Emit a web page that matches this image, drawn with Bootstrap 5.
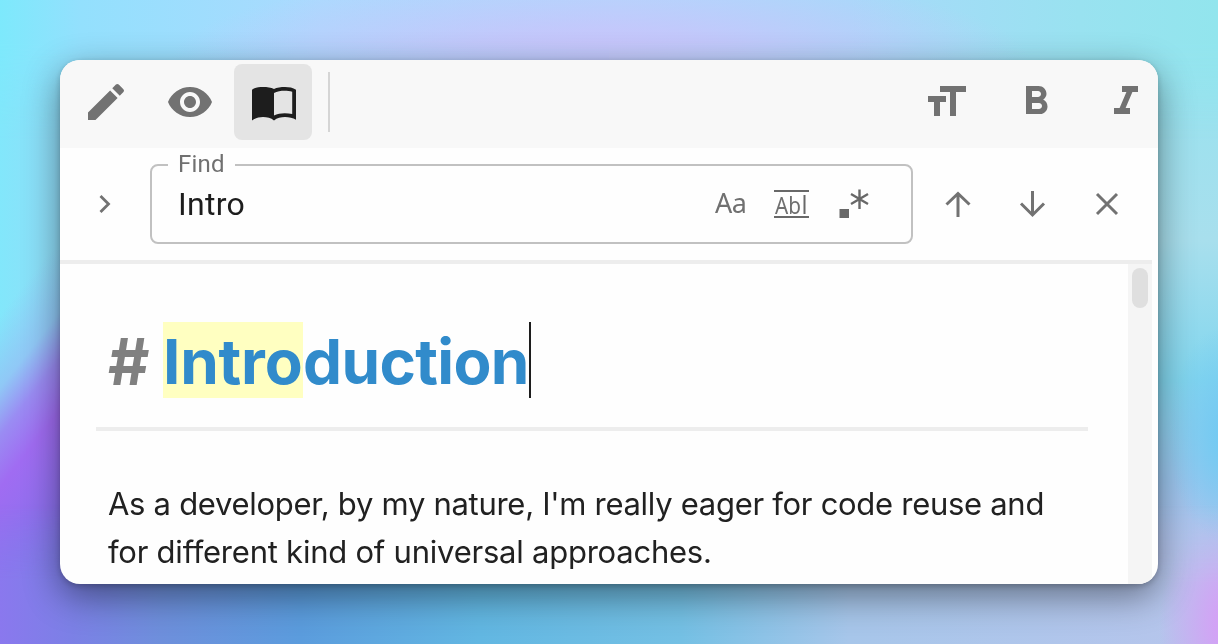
<!DOCTYPE html>
<html lang="en">
<head>
<meta charset="utf-8">
<meta name="viewport" content="width=device-width, initial-scale=1">
<title>Markdown editor</title>
<link href="https://cdn.jsdelivr.net/npm/bootstrap@5.3.0/dist/css/bootstrap.min.css" rel="stylesheet">
<style>
body{height:644px;padding:60px;overflow:hidden;font-family:Inter,"Liberation Sans",sans-serif;color:#212121;
background:
linear-gradient(128deg,#90c8f600 40px,#90c8f6 85px,#9a8cf3 114px,#a06cf2 146px,#8d70ee 200px,#7c7ae8 250px) 0 250px/120px 394px no-repeat,
radial-gradient(ellipse 60px 110px at 1228px 435px,#74caf2 15%,#74caf200 100%),
linear-gradient(180deg,#97e2ef 60px,#a8dfed 240px,#82d6ee 380px,#9cc6ee 480px,#b4c2ed 560px,#b9c4ed 644px) 609px 0/609px 100% no-repeat,
linear-gradient(90deg,#82e7fb 0,#90dcf8 60px,#90dcf8 100%)}
/* soft colour bands along the top and bottom of the backdrop */
body::before,body::after{content:"";position:fixed;z-index:-1;left:0;right:0;height:140px}
body::before{top:0;background:radial-gradient(ellipse 430px 90px at 600px 60px,#c9c3fb 0,#c9c3fbc0 35%,#c9c3fb00 100%),linear-gradient(90deg,#7de9fc 0,#93e0fd 80px,#abdafe 320px,#b0d9fd 620px,#a8d9fa 850px,#99e2f0 1080px,#92e5ed 1218px);-webkit-mask-image:linear-gradient(#000 30%,transparent)}
body::after{bottom:0;background:radial-gradient(ellipse 75px 120px at 1234px 122px,#d2a3f5 25%,#d2a3f500 100%),linear-gradient(90deg,#8a78ee 0,#7c80e6 70px,#6e8fdc 160px,#5b9cdd 300px,#62b7e2 480px,#74c0e4 680px,#a7c6ea 850px,#b7c5ec 1218px);-webkit-mask-image:linear-gradient(transparent,#000 56%)}
.editor{width:1098px;height:524px;border-radius:20px;background:#fefefe;box-shadow:0 12px 36px rgba(0,0,0,.44),0 2px 6px rgba(0,0,0,.2)}
.editor-tools{height:88px;background:#f8f8f8;color:#727272;padding:4px 0 0 6px}
.editor-tools .btn{width:78px;height:76px;padding:0 0 0 2px;margin-right:6px;border:0;border-radius:8px;color:inherit;line-height:0}
.editor-tools .btn.active{background:#e4e4e4;color:#1d1d1d}
.editor-tools .format-tool{width:90px;margin:0;padding:0}
.tool-rule{width:2px;height:60px;margin:8px 0 0 10px;background:#d5d5d5}
.tools-end{margin-right:-13px}
.find-row{width:1092px;height:116px;border-bottom:4px solid #ededed;color:#727272;font-family:Roboto,"Liberation Sans",sans-serif}
.find-toggle{width:90px;height:112px}
.find-field{width:763px;height:91px;margin-top:5px;border:2px solid #c1c1c1;border-radius:8px;padding:0 40px 0 26px}
.find-field legend{float:none;width:67px;height:24px;margin:0 0 0 -10px;padding-left:10px;font-size:24px;line-height:22px;letter-spacing:.2px;color:#707070}
.find-field .form-control{border:0;padding:0;font-size:32px;line-height:40px;letter-spacing:.3px;color:#1d1d1d;background:none;box-shadow:none}
.find-text{height:54px}
.find-steps{height:112px}
.page-body{height:320px}
.page-text{width:1068px;padding:58px 40px 0 36px}
.page-text h1{height:109px;margin:0;padding-left:12px;border-bottom:4px solid #ededed;font-size:62px;font-weight:700;line-height:79px;letter-spacing:-.65px;white-space:pre;color:#318bcb}
.hash-sign{color:#808080;width:55px;font-size:64px}
.found{background:#ffffc1;width:140px;height:76px;letter-spacing:-.2px}
.caret{width:2px;height:76px;background:#1d1d1d}
.page-text p{margin:49px 0 0 12px;font-size:31px;line-height:48px;letter-spacing:-.29px;white-space:nowrap}
.last-line{letter-spacing:-.23px}
.scroll-track{width:24px;background:#f5f5f5;padding:4px}
.scroll-thumb{height:40px;border-radius:8px;background:#dfdfdf}
</style>
</head>
<body>
<main class="editor overflow-hidden">
 <div class="editor-tools d-flex align-items-start">
  <button class="btn" aria-label="Edit"><svg width="48" height="48" viewBox="0 0 24 24" fill="currentColor"><path d="M3 17.25V21h3.75L17.81 9.94l-3.75-3.75L3 17.25zM20.71 7.04a1 1 0 0 0 0-1.41l-2.34-2.34a1 1 0 0 0-1.41 0l-1.83 1.83 3.75 3.75 1.83-1.83z"/></svg></button>
  <button class="btn" aria-label="Preview"><svg width="48" height="48" viewBox="0 0 24 24" fill="currentColor"><path d="M12 4.5C7 4.5 2.73 7.61 1 12c1.73 4.39 6 7.5 11 7.5s9.27-3.11 11-7.5c-1.73-4.39-6-7.5-11-7.5zM12 17c-2.76 0-5-2.24-5-5s2.24-5 5-5 5 2.24 5 5-2.24 5-5 5zm0-8c-1.66 0-3 1.34-3 3s1.34 3 3 3 3-1.34 3-3-1.34-3-3-3z"/></svg></button>
  <button class="btn active" aria-label="Split view"><svg width="48" height="48" viewBox="0 0 24 24" fill="currentColor"><path fill-rule="evenodd" d="M12 5.5C10.6 4.7 8.5 4.5 6.5 4.5S2.4 4.8 1 5.9v15.4C2.4 20.1 4.5 19.5 6.500 19.5s4 .5 5.500 1.700c1.500-1.200 3.500-1.700 5.500-1.700s4 .5 5.500 1.400V5.900C21.500 4.800 19.500 4.500 17.500 4.500s-4.100.2-5.500 1zm0 13.300V7.500c1.500-.8 3.500-1.100 5.300-1.100 1.300 0 2.700.1 3.800.5V18c-1.200-.3-2.500-.4-3.800-.4-1.800 0-3.800.4-5.300 1.200z"/></svg></button>
  <div class="tool-rule"></div>
  <div class="tools-end d-flex ms-auto">
   <button class="btn format-tool" aria-label="Text size"><svg width="48" height="48" viewBox="0 0 24 24" fill="currentColor"><path d="M9 4h13v3h-5v12h-3V7H9zM3 9h9v3H9v7H6v-7H3z"/></svg></button>
   <button class="btn format-tool" aria-label="Bold"><svg width="48" height="48" viewBox="0 0 24 24" fill="currentColor"><path d="M15.6 10.79c.97-.67 1.65-1.77 1.65-2.79 0-2.26-1.75-4-4-4H7v14h7.04c2.09 0 3.71-1.7 3.71-3.79 0-1.52-.86-2.82-2.15-3.42zM10 6.5h3c.83 0 1.5.67 1.5 1.5s-.67 1.5-1.5 1.5h-3zm3.500 9H10v-3h3.500c.83 0 1.500.67 1.500 1.500s-.67 1.500-1.500 1.500z"/></svg></button>
   <button class="btn format-tool" aria-label="Italic"><svg width="48" height="48" viewBox="0 0 24 24" fill="currentColor"><path d="M10 4v3h2.210l-3.420 8H6v3h8v-3h-2.210l3.420-8H18V4z"/></svg></button>
  </div>
 </div>
 <div class="find-row d-flex align-items-start">
  <div class="find-toggle d-flex align-items-center justify-content-center flex-shrink-0"><svg width="16" height="22" viewBox="0 0 16 22"><path d="M3.500 3l8 8-8 8" fill="none" stroke="currentColor" stroke-width="2.800"/></svg></div>
  <fieldset class="find-field flex-shrink-0">
   <legend>Find</legend>
   <div class="find-text d-flex align-items-center">
    <input class="form-control flex-fill" value="Intro" aria-label="Find">
    <svg class="flex-shrink-0" width="156" height="48" viewBox="0 0 156 48">
     <g font-family="Noto Sans,sans-serif" fill="#707070"><text x="0" y="32.500" font-size="27" textLength="32">Aa</text><text x="60" y="33.500" font-size="23" textLength="26" lengthAdjust="spacingAndGlyphs">Ab</text></g>
     <path d="M59 11h35M59 37h35M89.500 15v19" stroke="#686868" stroke-width="2"/><path d="M124.500 29h9.500v9h-9.500z" fill="#686868"/><path d="M144.500 9.500V29M136 14l17 10M136 24l17-10" stroke="#686868" stroke-width="2.400"/>
    </svg>
   </div>
  </fieldset>
  <div class="find-steps d-flex align-items-center">
   <svg class="flex-shrink-0" width="230" height="48" viewBox="0 0 230 48"><path d="M45 37V13.500M33.500 24.500L45 13.500l11.500 11M119.500 11v23.500M108 23.500l11.500 11.500L131 23.500M184 14l20 20M184 34l20-20" fill="none" stroke="currentColor" stroke-width="3"/></svg>
  </div>
 </div>
 <div class="page-body d-flex">
  <article class="page-text">
   <h1 class="d-flex"><span class="hash-sign">#</span><span class="found">Intro</span><span>duction</span><span class="caret"></span></h1>
   <p>As a developer, by my nature, I'm really eager for code reuse and<br><span class="last-line">for different kind of universal approaches.</span></p>
  </article>
  <div class="scroll-track"><div class="scroll-thumb"></div></div>
 </div>
</main>
<script src="https://cdn.jsdelivr.net/npm/bootstrap@5.3.0/dist/js/bootstrap.bundle.min.js"></script>
</body>
</html>
